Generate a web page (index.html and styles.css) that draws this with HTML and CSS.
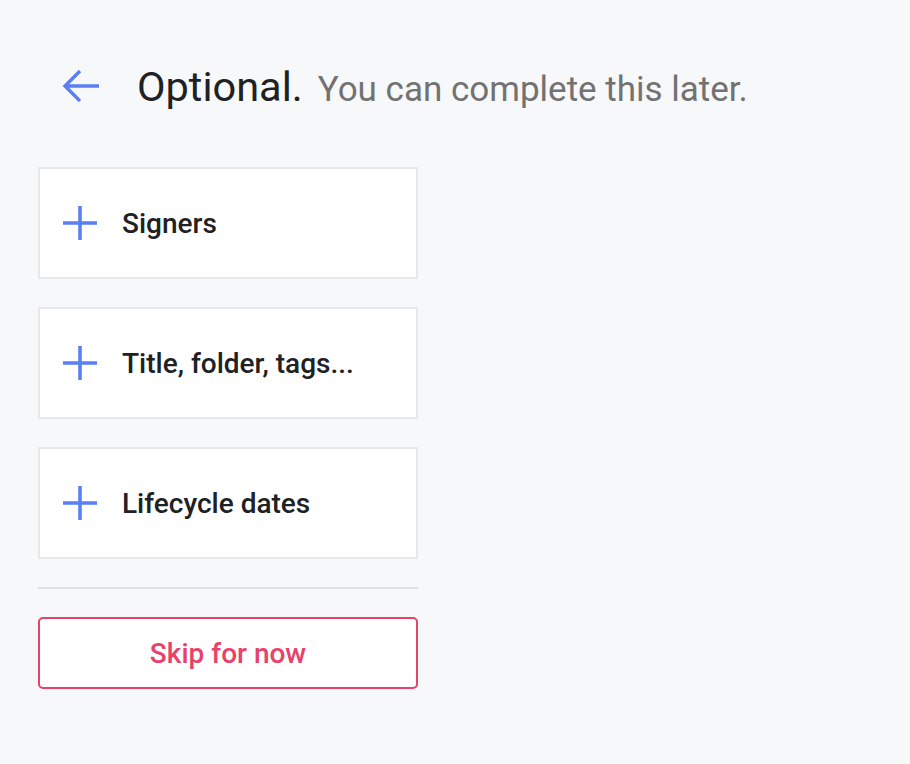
FILE: index.html
```html
<!DOCTYPE html>
<html lang="en">
<head>
<meta charset="utf-8">
<link rel="stylesheet" href="styles.css">
</head>
<body>
<div class="page">
  <header class="header">
    <button class="back" aria-label="Back">
      <svg width="40" height="36" viewBox="0 0 40 36"><path d="M38 18H4M19 3L4 18l15 15" fill="none" stroke="#5b7ff2" stroke-width="3.4" stroke-linecap="butt" stroke-linejoin="miter"/></svg>
    </button>
    <h1 class="title">Optional.<span class="sub">You can complete this later.</span></h1>
  </header>
  <div class="cards">
    <button class="card"><svg class="plus" width="34" height="34" viewBox="0 0 34 34"><path d="M17 0v34M0 17h34" stroke="#5b7ff5" stroke-width="3.6"/></svg><span>Signers</span></button>
    <button class="card"><svg class="plus" width="34" height="34" viewBox="0 0 34 34"><path d="M17 0v34M0 17h34" stroke="#5b7ff5" stroke-width="3.6"/></svg><span>Title, folder, tags...</span></button>
    <button class="card"><svg class="plus" width="34" height="34" viewBox="0 0 34 34"><path d="M17 0v34M0 17h34" stroke="#5b7ff5" stroke-width="3.6"/></svg><span>Lifecycle dates</span></button>
  </div>
  <hr class="divider">
  <button class="skip">Skip for now</button>
</div>
</body>
</html>
```
FILE: styles.css
```css
html, body {
  margin: 0;
  padding: 0;
  background: #f7f8fa;
  font-family: Roboto, "Liberation Sans", sans-serif;
}
.page {
  width: 380px;
  padding: 0 0 0 38px;
}
.header {
  display: flex;
  align-items: center;
  height: 60px;
  margin-top: 56px;
  margin-bottom: 51px;
  white-space: nowrap;
}
.back {
  border: 0;
  background: none;
  padding: 0;
  margin-left: 23px;
  margin-right: 36px;
  display: flex;
  cursor: pointer;
}
.title {
  margin: 0;
  font-size: 41.5px;
  font-weight: 400;
  color: #202124;
  letter-spacing: 0;
}
.sub {
  font-size: 35px;
  color: #727272;
  margin-left: 15px;
}
.cards {
  display: flex;
  flex-direction: column;
  gap: 28px;
}
.card {
  display: flex;
  align-items: center;
  box-sizing: border-box;
  height: 112px;
  width: 380px;
  background: #fff;
  border: 2px solid #e6e8ea;
  border-radius: 0;
  padding: 0 0 0 23px;
  font-family: inherit;
  font-size: 28px;
  font-weight: 500;
  color: #202124;
  cursor: pointer;
}
.plus {
  margin-right: 25px;
  flex: none;
}
.divider {
  border: 0;
  border-top: 2px solid #dfe0e2;
  margin: 28px 0 28px;
  width: 380px;
}
.skip {
  box-sizing: border-box;
  width: 380px;
  height: 72px;
  background: #fff;
  border: 2px solid #e8426a;
  border-radius: 5px;
  color: #e8426a;
  font-family: inherit;
  font-size: 28px;
  font-weight: 500;
  cursor: pointer;
}
```
